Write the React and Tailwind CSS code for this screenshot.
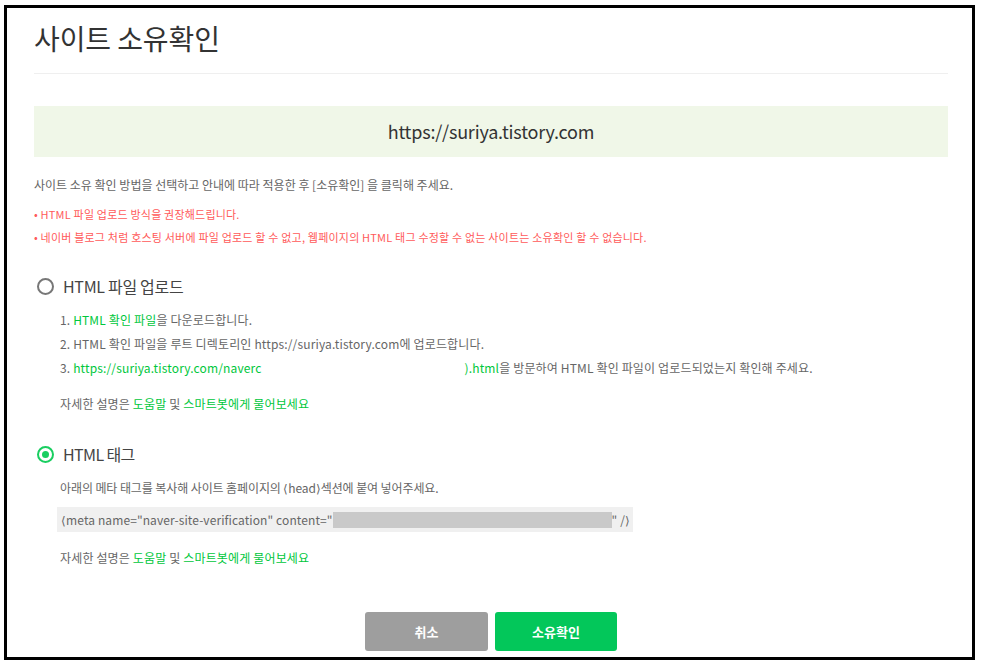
import React from 'react';

const font = { fontFamily: '"Noto Sans CJK KR", "Noto Sans", sans-serif' };

// 라디오 버튼
const Radio = ({ checked }) => (
  <span
    className={`flex items-center justify-center w-[17px] h-[17px] rounded-full border-2 ${
      checked ? 'border-[#19ce60]' : 'border-[#777]'
    }`}
  >
    {checked && <span className="w-[7px] h-[7px] rounded-full bg-[#19ce60]" />}
  </span>
);

const HelpLine = ({ className = '' }) => (
  <p className={`text-[12px] leading-[20px] text-[#666] tracking-[0.15px] ${className}`}>
    자세한 설명은 <span className="text-[#00c73c]">도움말</span> 및{' '}
    <span className="text-[#00c73c]">스마트봇에게 물어보세요</span>
  </p>
);

export default function App() {
  return (
    <div className="w-[981px] h-[666px] bg-white pt-[5px] pl-[4px]" style={font}>
      <div className="w-[971px] h-[655px] border-[3px] border-black bg-white pl-[27px] pr-[24px]">
        {/* 제목 */}
        <div className="h-[66px] border-b border-[#efefef] pt-[12px]">
          <h1 className="text-[28px] leading-[36px] text-[#333] font-normal tracking-[-0.1px]">사이트 소유확인</h1>
        </div>

        {/* 사이트 주소 */}
        <div className="mt-[32px] h-[51px] bg-[#f0f7e8] flex items-center justify-center">
          <span className="text-[18px] text-[#333] tracking-[-0.2px]">https://suriya.tistory.com</span>
        </div>

        <p className="mt-[18px] text-[12px] leading-[20px] text-[#666]">
          사이트 소유 확인 방법을 선택하고 안내에 따라 적용한 후 [소유확인] 을 클릭해 주세요.
        </p>
        <p className="mt-[8px] text-[11px] leading-[23px] text-[#ff5a5a] tracking-[0.2px]">
          • HTML 파일 업로드 방식을 권장해드립니다.
        </p>
        <p className="text-[11px] leading-[23px] text-[#ff5a5a] tracking-[0.2px]">
          • 네이버 블로그 처럼 호스팅 서버에 파일 업로드 할 수 없고, 웹페이지의 HTML 태그 수정할 수 없는 사이트는 소유확인 할 수 없습니다.
        </p>

        {/* HTML 파일 업로드 */}
        <div className="mt-[25px] h-[24px] flex items-center gap-[9px] pl-[3px]">
          <Radio checked={false} />
          <span className="text-[16px] text-[#444] tracking-[-0.3px]">HTML 파일 업로드</span>
        </div>
        <div className="mt-[10px] pl-[26px] text-[12px] leading-[24px] text-[#666] tracking-[0.15px]">
          <p>
            1. <span className="text-[#00c73c]">HTML 확인 파일</span>을 다운로드합니다.
          </p>
          <p>2. HTML 확인 파일을 루트 디렉토리인 https://suriya.tistory.com에 업로드합니다.</p>
          <p className="flex whitespace-nowrap">
            <span>3.&nbsp;</span>
            <span className="text-[#00c73c]">https://suriya.tistory.com/naverc</span>
            <span className="inline-block w-[203px]" />
            <span className="text-[#00c73c]">).html</span>
            <span>을 방문하여 HTML 확인 파일이 업로드되었는지 확인해 주세요.</span>
          </p>
        </div>
        <HelpLine className="mt-[12px] pl-[26px] leading-[24px]" />

        {/* HTML 태그 */}
        <div className="mt-[26px] h-[24px] flex items-center gap-[9px] pl-[3px]">
          <Radio checked />
          <span className="text-[16px] text-[#444] tracking-[-0.6px]">HTML 태그</span>
        </div>
        <div className="pl-[26px]">
          <p className="mt-[12px] text-[12px] leading-[20px] text-[#666] tracking-[-0.1px]">
            아래의 메타 태그를 복사해 사이트 홈페이지의 ⟨head⟩섹션에 붙여 넣어주세요.
          </p>
          <div className="mt-[9px] -ml-[3px] w-[576px] h-[25px] bg-[#f0f0f0] flex items-center pl-[4px] text-[12px] text-[#666] tracking-[0.1px] whitespace-nowrap">
            <span>⟨meta name="naver-site-verification" content="</span>
            <span className="inline-block w-[279px] h-[16px] bg-[#c9c9c9]" />
            <span>" /⟩</span>
          </div>
          <HelpLine className="mt-[16px]" />
        </div>

        {/* 버튼 */}
        <div className="mt-[44px] flex justify-center gap-[7px]">
          <button className="w-[123px] h-[39px] rounded-[3px] bg-[#9e9e9e] text-white text-[13px] font-bold">취소</button>
          <button className="w-[122px] h-[39px] rounded-[3px] bg-[#03c75a] text-white text-[13px] font-bold">소유확인</button>
        </div>
      </div>
    </div>
  );
}
